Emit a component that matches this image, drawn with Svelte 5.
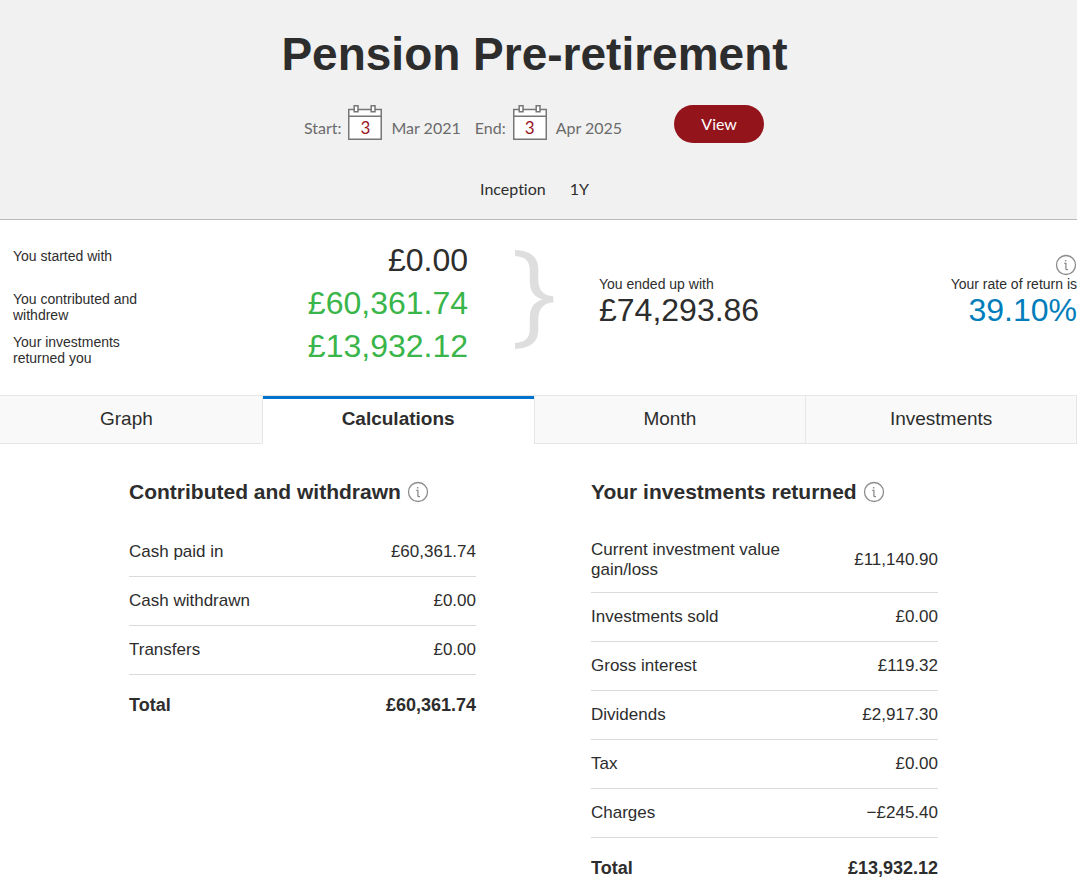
<script lang="ts">
  interface Row {
    label: string;
    value: string;
  }
  interface Panel {
    id: string;
    title: string;
    rows: Row[];
    total: string;
  }

  const tabs = ['Graph', 'Calculations', 'Month', 'Investments'];
  let active = $state('Calculations');

  const dates = [
    { label: 'Start:', day: '3', month: 'Mar 2021' },
    { label: 'End:', day: '3', month: 'Apr 2025' },
  ];

  const summary = [
    { label: 'You started with', value: '£0.00', gain: false },
    { label: 'You contributed and withdrew', value: '£60,361.74', gain: true },
    { label: 'Your investments returned you', value: '£13,932.12', gain: true },
  ];

  const panels: Panel[] = [
    {
      id: 'contributed',
      title: 'Contributed and withdrawn',
      rows: [
        { label: 'Cash paid in', value: '£60,361.74' },
        { label: 'Cash withdrawn', value: '£0.00' },
        { label: 'Transfers', value: '£0.00' },
      ],
      total: '£60,361.74',
    },
    {
      id: 'returned',
      title: 'Your investments returned',
      rows: [
        { label: 'Current investment value gain/loss', value: '£11,140.90' },
        { label: 'Investments sold', value: '£0.00' },
        { label: 'Gross interest', value: '£119.32' },
        { label: 'Dividends', value: '£2,917.30' },
        { label: 'Tax', value: '£0.00' },
        { label: 'Charges', value: '−£245.40' },
      ],
      total: '£13,932.12',
    },
  ];
</script>

{#snippet info(label: string)}
  <button class="info" type="button" aria-label={label}>
    <svg viewBox="0 0 22 22" aria-hidden="true">
      <circle cx="11" cy="11" r="9.5" />
      <path d="M10.6 6v1.6M9.2 9.4h1.7v5.3q0 .9 .9 .9h1.2" />
    </svg>
  </button>
{/snippet}

<div class="page">
  <header>
    <h1>Pension Pre-retirement</h1>
    <form class="range" onsubmit={(e) => e.preventDefault()}>
      {#each dates as d (d.label)}
        <div class="date">
          <span>{d.label}</span>
          <button class="cal" type="button" aria-label="{d.label} {d.day} {d.month}">
            <svg viewBox="0 0 34 36" aria-hidden="true">
              <path class="sheet" d="M.75 4.5h32.5v29.75H.75z" />
              <path d="M.75 11.2h32.5" />
              <path class="sheet" d="M6.2 .75h3.8v6h-3.8zM23.2 .75h3.8v6h-3.8z" />
            </svg>
            <span class="day">{d.day}</span>
          </button>
          <span class="month">{d.month}</span>
        </div>
      {/each}
      <button class="view" type="submit">View</button>
    </form>
    <div class="presets">
      <button type="button">Inception</button>
      <button type="button">1Y</button>
    </div>
  </header>

  <section class="summary">
    <dl class="parts">
      {#each summary as s (s.label)}
        <dt>{s.label}</dt>
        <dd class:gain={s.gain}>{s.value}</dd>
      {/each}
    </dl>
    <svg class="brace" viewBox="0 0 40 100" aria-hidden="true">
      <path d="M1 0C16 .5 24.3 7 24.3 19V30C24.3 40 29.5 46 39.3 46.2V52.4C29.5 52.6 24.3 59 24.3 69V80C24.3 92 16 98.5 1 99V93C11 92.5 15.8 88 15.8 79V68C15.8 58 20 51.8 28.8 49.5C20 47 15.8 41 15.8 31V20C15.8 11 11 6.5 1 6Z" />
    </svg>
    <div class="ended">
      <span class="caption">You ended up with</span>
      <span class="figure">£74,293.86</span>
    </div>
    <div class="rate">
      {@render info('About rate of return')}
      <span class="caption">Your rate of return is</span>
      <span class="figure">39.10%</span>
    </div>
  </section>

  <div class="tabs" role="tablist">
    {#each tabs as t (t)}
      <button type="button" role="tab" class:active={t === active} aria-selected={t === active} onclick={() => (active = t)}>{t}</button>
    {/each}
  </div>

  <main>
    {#each panels as p (p.id)}
      <section>
        <div class="head">
          <h2 id={p.id}>{p.title}</h2>
          {@render info(`About ${p.title}`)}
        </div>
        <table aria-labelledby={p.id}>
          <tbody>
            {#each p.rows as r (r.label)}
              <tr>
                <th scope="row">{r.label}</th>
                <td>{r.value}</td>
              </tr>
            {/each}
          </tbody>
          <tfoot>
            <tr>
              <th scope="row">Total</th>
              <td>{p.total}</td>
            </tr>
          </tfoot>
        </table>
      </section>
    {/each}
  </main>
</div>

<style>
  :global(body) {
    margin: 0;
    background: #fff;
  }
  .page {
    margin-right: 3px;
    color: #2d2d2d;
    font-family: 'Liberation Sans', Arial, sans-serif;
    font-size: 17px;
    line-height: 20px;
  }
  button {
    padding: 0;
    border: none;
    background: transparent;
    color: inherit;
    font: inherit;
    cursor: pointer;
  }
  header {
    display: flex;
    flex-direction: column;
    align-items: center;
    padding-bottom: 20px;
    border-bottom: 1px solid #bababa;
    background: #f1f1f1;
    font-family: Lato, 'Open Sans', sans-serif;
    font-size: 16px;
    font-variant-ligatures: none;
  }
  h1 {
    margin: 26px 8px 0 0;
    font-family: 'Liberation Sans', Arial, sans-serif;
    font-size: 46px;
    line-height: 56px;
  }
  .range {
    display: flex;
    align-items: flex-start;
    margin: 23px 9px 0 0;
    color: #6b6b6b;
  }
  .date {
    display: flex;
    align-items: flex-end;
    gap: 7px;
    height: 36px;
    margin-right: 14px;
    line-height: 26px;
  }
  .month {
    margin-left: 2px;
  }
  .cal {
    position: relative;
    width: 34px;
    height: 36px;
    font-size: 17px;
  }
  .cal svg {
    display: block;
    fill: none;
    stroke: #777;
    stroke-width: 1.5;
  }
  .cal .sheet {
    fill: #fff;
  }
  .day {
    position: absolute;
    inset: 12px 0 0;
    color: #98141d;
    line-height: 22px;
  }
  .view {
    width: 90px;
    height: 38px;
    margin-left: 38px;
    border-radius: 19px;
    background: #94141c;
    color: #fff;
  }
  .presets {
    display: flex;
    gap: 24px;
    margin: 36px 8px 0 0;
  }
  .summary {
    display: flex;
    height: 175px;
  }
  .parts {
    display: grid;
    grid-template-columns: 150px 305px;
    grid-auto-rows: 43px;
    margin: 20px 0 0 13px;
    font-size: 14px;
    line-height: 16px;
  }
  dt {
    padding-top: 8px;
  }
  dd {
    margin: 0;
    text-align: right;
  }
  dd,
  .figure {
    font-size: 32px;
    line-height: 40px;
  }
  .gain {
    color: #39b54a;
  }
  .brace {
    width: 40px;
    height: 100px;
    margin: 30px 0 0 46px;
    fill: #dedede;
  }
  .ended,
  .rate {
    display: flex;
    flex-direction: column;
    margin-top: 34px;
  }
  .ended {
    margin: 56px 0 0 45px;
  }
  .rate {
    align-items: flex-end;
    margin-left: auto;
  }
  .caption {
    font-size: 14px;
    line-height: 16px;
  }
  .figure {
    line-height: 36px;
  }
  .rate .figure {
    color: #007dba;
  }
  .info {
    width: 22px;
    height: 22px;
  }
  .info svg {
    display: block;
    fill: none;
    stroke: #8c8c8c;
    stroke-width: 1.3;
  }
  .tabs {
    display: grid;
    grid-template-columns: repeat(4, 1fr);
    margin-left: -10px;
  }
  .tabs button {
    height: 49px;
    padding-bottom: 2px;
    border: solid #e6e6e6;
    border-width: 1px 0 1px 1px;
    background: #f9f9f9;
    font-size: 19px;
  }
  .tabs button:last-child {
    border-right-width: 1px;
  }
  .tabs .active {
    border-bottom-color: #fff;
    background: #fff;
    box-shadow: inset 0 3px #0073cf;
    font-weight: bold;
  }
  main {
    display: grid;
    grid-template-columns: 347px 347px;
    justify-content: center;
    align-items: start;
    gap: 115px;
    margin: 36px 10px 0 0;
  }
  .head {
    display: flex;
    align-items: center;
    gap: 6px;
  }
  h2 {
    margin: 0;
    font-size: 21px;
    line-height: 24px;
  }
  table {
    width: 100%;
    margin-top: 24px;
    border-collapse: collapse;
  }
  tbody tr {
    border-bottom: 1px solid #dadada;
  }
  th,
  td {
    height: 24px;
    padding: 12px 0;
    text-align: left;
    font-weight: normal;
  }
  th {
    width: 220px;
  }
  td {
    text-align: right;
  }
  tfoot th,
  tfoot td {
    padding: 18px 0 0;
    font-size: 18px;
    font-weight: bold;
  }
</style>
